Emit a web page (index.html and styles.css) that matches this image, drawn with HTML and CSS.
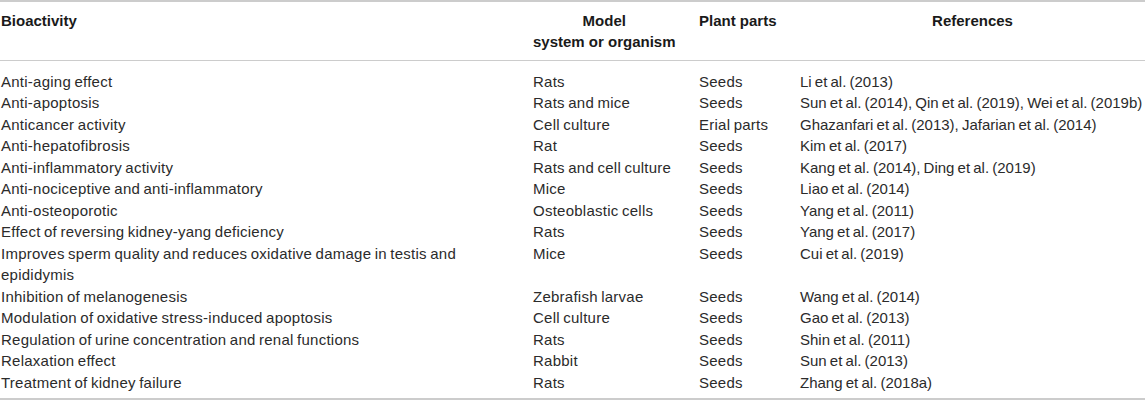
FILE: index.html
```html
<!DOCTYPE html>
<html>
<head>
<meta charset="utf-8">
<link rel="stylesheet" href="styles.css">
</head>
<body>
<table class="bio-table">
  <colgroup>
    <col class="c-bio">
    <col class="c-model">
    <col class="c-part">
    <col class="c-ref">
  </colgroup>
  <thead>
    <tr>
      <th class="h-left">Bioactivity</th>
      <th class="h-left"><span class="model-head">Model<br>system or organism</span></th>
      <th class="h-left">Plant parts</th>
      <th class="h-center">References</th>
    </tr>
  </thead>
  <tbody>
    <tr class="first"><td>Anti-aging effect</td><td>Rats</td><td>Seeds</td><td class="ref">Li et al. (2013)</td></tr>
    <tr><td>Anti-apoptosis</td><td>Rats and mice</td><td>Seeds</td><td class="ref">Sun et al. (2014), Qin et al. (2019), Wei et al. (2019b)</td></tr>
    <tr><td>Anticancer activity</td><td>Cell culture</td><td>Erial parts</td><td class="ref">Ghazanfari et al. (2013), Jafarian et al. (2014)</td></tr>
    <tr><td>Anti-hepatofibrosis</td><td>Rat</td><td>Seeds</td><td class="ref">Kim et al. (2017)</td></tr>
    <tr><td>Anti-inflammatory activity</td><td>Rats and cell culture</td><td>Seeds</td><td class="ref">Kang et al. (2014), Ding et al. (2019)</td></tr>
    <tr><td>Anti-nociceptive and anti-inflammatory</td><td>Mice</td><td>Seeds</td><td class="ref">Liao et al. (2014)</td></tr>
    <tr><td>Anti-osteoporotic</td><td>Osteoblastic cells</td><td>Seeds</td><td class="ref">Yang et al. (2011)</td></tr>
    <tr><td>Effect of reversing kidney-yang deficiency</td><td>Rats</td><td>Seeds</td><td class="ref">Yang et al. (2017)</td></tr>
    <tr><td>Improves sperm quality and reduces oxidative damage in testis and<br>epididymis</td><td>Mice</td><td>Seeds</td><td class="ref">Cui et al. (2019)</td></tr>
    <tr><td>Inhibition of melanogenesis</td><td>Zebrafish larvae</td><td>Seeds</td><td class="ref">Wang et al. (2014)</td></tr>
    <tr><td>Modulation of oxidative stress-induced apoptosis</td><td>Cell culture</td><td>Seeds</td><td class="ref">Gao et al. (2013)</td></tr>
    <tr><td>Regulation of urine concentration and renal functions</td><td>Rats</td><td>Seeds</td><td class="ref">Shin et al. (2011)</td></tr>
    <tr><td>Relaxation effect</td><td>Rabbit</td><td>Seeds</td><td class="ref">Sun et al. (2013)</td></tr>
    <tr class="last"><td>Treatment of kidney failure</td><td>Rats</td><td>Seeds</td><td class="ref">Zhang et al. (2018a)</td></tr>
  </tbody>
</table>
</body>
</html>
```

FILE: styles.css
```css
html, body {
  margin: 0;
  padding: 0;
  background: #ffffff;
}

.bio-table {
  width: 1145px;
  border-collapse: collapse;
  table-layout: fixed;
  font-family: "Liberation Sans", Arial, sans-serif;
  font-size: 15px;
  color: #2b2b2b;
  border-top: 2px solid #cccccc;
  border-bottom: 2px solid #cccccc;
}

.c-bio { width: 532px; }
.c-model { width: 166px; }
.c-part { width: 101px; }
.c-ref { width: 346px; }

.bio-table th {
  font-weight: bold;
  color: #1a1a1a;
  line-height: 21px;
  padding: 8px 0 8px 1px;
  vertical-align: top;
  border-bottom: 1px solid #cccccc;
  white-space: nowrap;
}

.h-left { text-align: left; }
.h-center { text-align: center; }

.model-head {
  display: inline-block;
  text-align: center;
}

.bio-table td {
  line-height: 21.5px;
  padding: 0 0 0 1px;
  vertical-align: top;
  white-space: nowrap;
  letter-spacing: 0.25px;
  word-spacing: -1px;
}

.bio-table td.ref {
  letter-spacing: 0;
  word-spacing: -1px;
}

.bio-table tr.first td {
  padding-top: 9.5px;
}

.bio-table tr.last td {
  padding-bottom: 4.5px;
}
```
